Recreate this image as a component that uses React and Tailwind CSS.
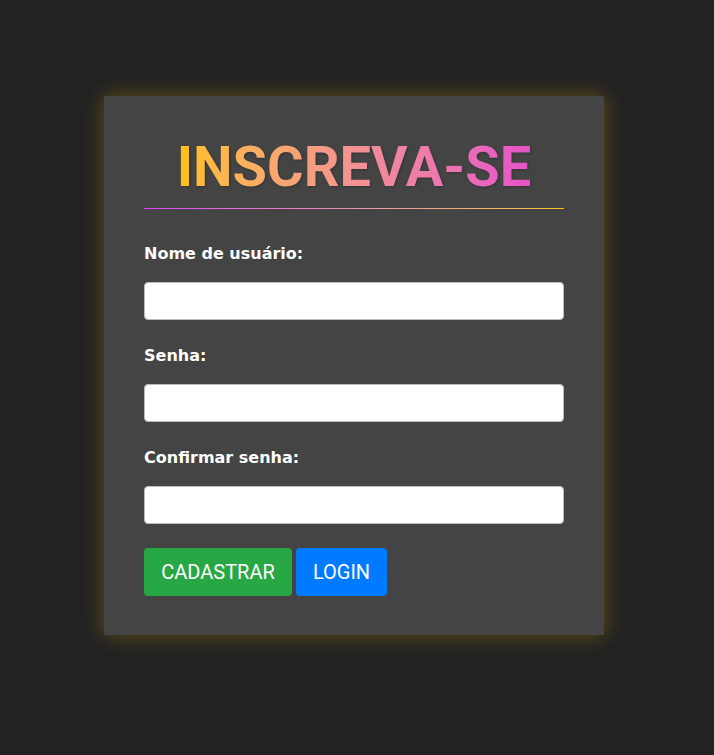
export default function App() {
  const fields = ['Nome de usuário:', 'Senha:', 'Confirmar senha:'];

  return (
    <div className="min-h-[755px] bg-[#222222] pt-[96px]">
      <div className="ml-[104px] w-[500px] bg-[#444444] px-[40px] pt-[43px] pb-[39px] shadow-[0_0_20px_rgba(255,193,7,0.3)]">
        <h1
          className="bg-gradient-to-r from-[#ffc107] to-[#e651c9] bg-clip-text text-center text-[56px] leading-[56px] font-bold text-transparent mx-auto w-fit"
          style={{ fontFamily: 'Roboto, "Liberation Sans", sans-serif', filter: 'drop-shadow(1px 1px 1px rgba(0,0,0,0.25))' }}
        >
          INSCREVA-SE
        </h1>
        <div className="mt-[13px] h-px bg-gradient-to-r from-[#e040fb] to-[#ffc107]" />

        <form className="mt-[33px]" style={{ fontFamily: '"DejaVu Sans", Verdana, sans-serif' }}>
          {fields.map(label => (
            <div key={label} className="mb-[24px]">
              <label className="block text-base leading-6 font-bold text-white mb-[16px]">{label}</label>
              <input
                type={label === 'Nome de usuário:' ? 'text' : 'password'}
                className="block h-[38px] w-full rounded border border-[#bbbbbb] bg-white px-3"
              />
            </div>
          ))}
          <div className="flex gap-1" style={{ fontFamily: 'Roboto, sans-serif' }}>
            <button type="button" className="h-[48px] w-[148px] rounded bg-[#28a745] text-xl text-white">
              CADASTRAR
            </button>
            <button type="button" className="h-[48px] w-[91px] rounded bg-[#007bff] text-xl text-white">
              LOGIN
            </button>
          </div>
        </form>
      </div>
    </div>
  );
}
